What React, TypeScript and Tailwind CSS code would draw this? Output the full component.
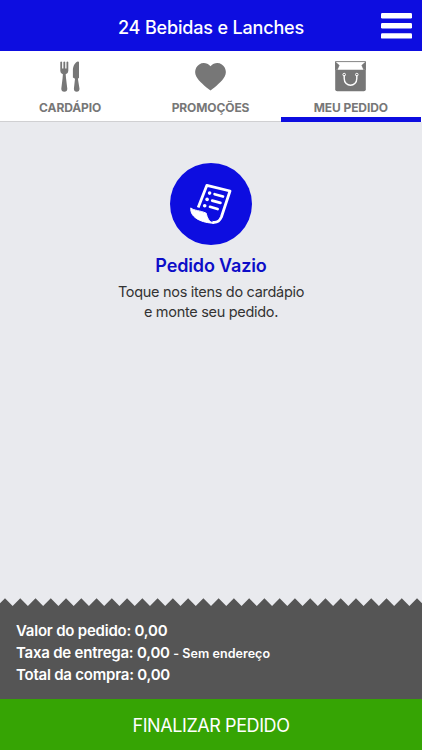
import type { ReactNode } from "react";

function MenuIcon() {
    return (
        <svg width="31" height="26" viewBox="0 0 31 26" fill="white">
            <rect width="31" height="5.4" rx="1.2" />
            <rect y="10" width="31" height="5.4" rx="1.2" />
            <rect y="20.2" width="31" height="5.4" rx="1.2" />
        </svg>
    );
}

function CutleryIcon() {
    return (
        <svg width="20" height="31" viewBox="0 0 20 31" fill="currentColor">
            <path d="M0.3 1Q1.2 0 2.1 1V7.6H3.4V1Q4.3 0 5.2 1V7.6H6.5V1Q7.4 0 8.3 1V10Q8.3 12.2 5.7 13.2L6 17L7.3 27.8Q7.3 30.8 4.3 30.8Q1.3 30.8 1.3 27.8L2.6 17L2.9 13.2Q0.3 12.2 0.3 10Z" />
            <path d="M19 1.2V16.7L17.9 17.8L19.5 27.8Q19.5 30.8 16.7 30.8Q13.9 30.8 13.9 27.8L15 17.8L12.9 16.5V9.5C12.9 5 15.2 1.1 18 0.5Q18.8 0.4 19 1.2Z" />
        </svg>
    );
}

function HeartIcon() {
    return (
        <svg width="31" height="28" viewBox="0 0 31 28" fill="currentColor">
            <path d="M15.5 3.3C12.1-0.5 7.6-0.6 4.2 1.4C0.2 3.8-1 9.5 1.3 13.5C3.7 18.2 10.5 23.8 15.5 27.5C20.5 23.8 27.3 18.2 29.7 13.5C32 9.5 30.8 3.8 26.8 1.4C23.4-0.6 18.9-0.5 15.5 3.3Z" />
        </svg>
    );
}

function BagIcon() {
    return (
        <svg width="31" height="31" viewBox="0 0 31 31" fill="none">
            <path d="M0.5 9V0.6H30.5V9" stroke="currentColor" strokeWidth="0.9" />
            <path d="M0.3 0.5L4.2 4L2.2 8.7H0.3ZM30.7 0.5L26.8 4L28.8 8.7H30.7Z" fill="currentColor" />
            <path d="M2 9L4.2 4.2M29 9L26.8 4.2" stroke="currentColor" strokeWidth="0.8" />
            <path d="M0.2 8.8H30.8V28.3Q30.8 30.3 28.8 30.3H2.2Q0.2 30.3 0.2 28.3Z" fill="currentColor" />
            <path d="M9.2 14V17.5C9.2 26.5 21.8 26.5 21.8 17.5V14" stroke="white" strokeWidth="1.4" />
            <circle cx="9.2" cy="13.6" r="1.3" stroke="white" strokeWidth="1" />
            <circle cx="21.8" cy="13.6" r="1.3" stroke="white" strokeWidth="1" />
        </svg>
    );
}

function ReceiptIcon() {
    return (
        <svg width="82" height="82" viewBox="0 0 82 82" fill="none" stroke="white">
            <path d="M28.2 44.5L36.8 22.4L60 28L51.4 54Q48.5 60.5 42.3 59.2" strokeWidth="2.8" strokeLinejoin="round" />
            <path d="M20.8 44.9C23.5 47.7 30.5 47.4 36.2 50.2C37.3 54.7 38.7 58.8 44 60.2C33 60 19.8 55.2 20.8 44.9Z" fill="white" strokeWidth="1" strokeLinejoin="round" />
            <path d="M44.6 31.2L53 33.5M42.2 37.6L50.4 39.9M40 43.8L47.6 46" strokeWidth="2.7" strokeLinecap="round" />
            <g fill="white" stroke="none">
                <circle cx="39.6" cy="30.1" r="1.8" />
                <circle cx="37.1" cy="36.4" r="1.8" />
                <circle cx="34.7" cy="42.7" r="1.8" />
            </g>
        </svg>
    );
}

function Tab({ label, icon, active = false }: { label: string; icon: ReactNode; active?: boolean }) {
    return (
        <a className={`flex h-[71px] flex-1 flex-col items-center border-b pt-[10px] ${active ? "border-[#0d0de0] shadow-[inset_0_-4px_0_#0d0de0]" : "border-[#d0d0d2]"}`}>
            <div className="flex h-[31px] items-center">{icon}</div>
            <span className="mt-[8px] text-[12px] leading-[16px] font-bold tracking-[-0.1px] whitespace-nowrap">{label}</span>
        </a>
    );
}

// saw-tooth edge on top of the order summary
function ZigZag() {
    const step = 15.26;
    let path = "M-10.26 9";
    for (let i = 0; i < 29; i++) {
        const x = -10.26 + i * step;
        path += `L${x} 0.3L${x + step / 2} 8`;
    }
    return (
        <svg width="422" height="9" viewBox="0 0 422 9" className="block w-full" fill="#555555">
            <path d={`${path}V9Z`} />
        </svg>
    );
}

function App() {
    return (
        <div className="flex h-screen flex-col overflow-hidden bg-[#e9eaee] font-['Inter','Liberation_Sans',sans-serif]">
            <header className="grid h-[51px] shrink-0 grid-cols-[1fr_auto_1fr] items-center bg-[#0d0de0] text-white">
                <span />
                <h1 className="pt-[4px] text-[18px] leading-6 font-medium tracking-[-0.17px]">24 Bebidas e Lanches</h1>
                <button className="justify-self-end pr-[10px]" aria-label="Menu">
                    <MenuIcon />
                </button>
            </header>

            <nav className="flex shrink-0 bg-white pr-px text-[#777777]">
                <Tab label="CARDÁPIO" icon={<CutleryIcon />} />
                <Tab label="PROMOÇÕES" icon={<HeartIcon />} />
                <Tab label="MEU PEDIDO" icon={<BagIcon />} active />
            </nav>

            <main className="flex flex-1 flex-col items-center pt-[41px] text-center">
                <div className="size-[82px] rounded-full bg-[#0d0de0]">
                    <ReceiptIcon />
                </div>
                <h2 className="mt-[9px] text-[18px] leading-6 font-semibold tracking-[-0.15px] text-[#0d0dc8]">Pedido Vazio</h2>
                <p className="mt-[4px] text-[14.5px] leading-[20px] tracking-[-0.3px] text-[#333333]">
                    Toque nos itens do cardápio
                    <br />
                    e monte seu pedido.
                </p>
            </main>

            <footer className="shrink-0 text-white">
                <ZigZag />
                <div className="h-[92px] bg-[#555555] pt-[13px] pl-4 text-[15px] leading-[22px] font-semibold tracking-[-0.22px]">
                    <p>Valor do pedido: 0,00</p>
                    <p className="h-[22px]">
                        Taxa de entrega: 0,00 <span className="text-[12.5px] tracking-[0.05px]">- Sem endereço</span>
                    </p>
                    <p>Total da compra: 0,00</p>
                </div>
                <button className="h-[51px] w-full bg-[#36a404] pt-[1px] text-[18px] tracking-[-0.42px]">FINALIZAR PEDIDO</button>
            </footer>
        </div>
    );
}

export default App;
